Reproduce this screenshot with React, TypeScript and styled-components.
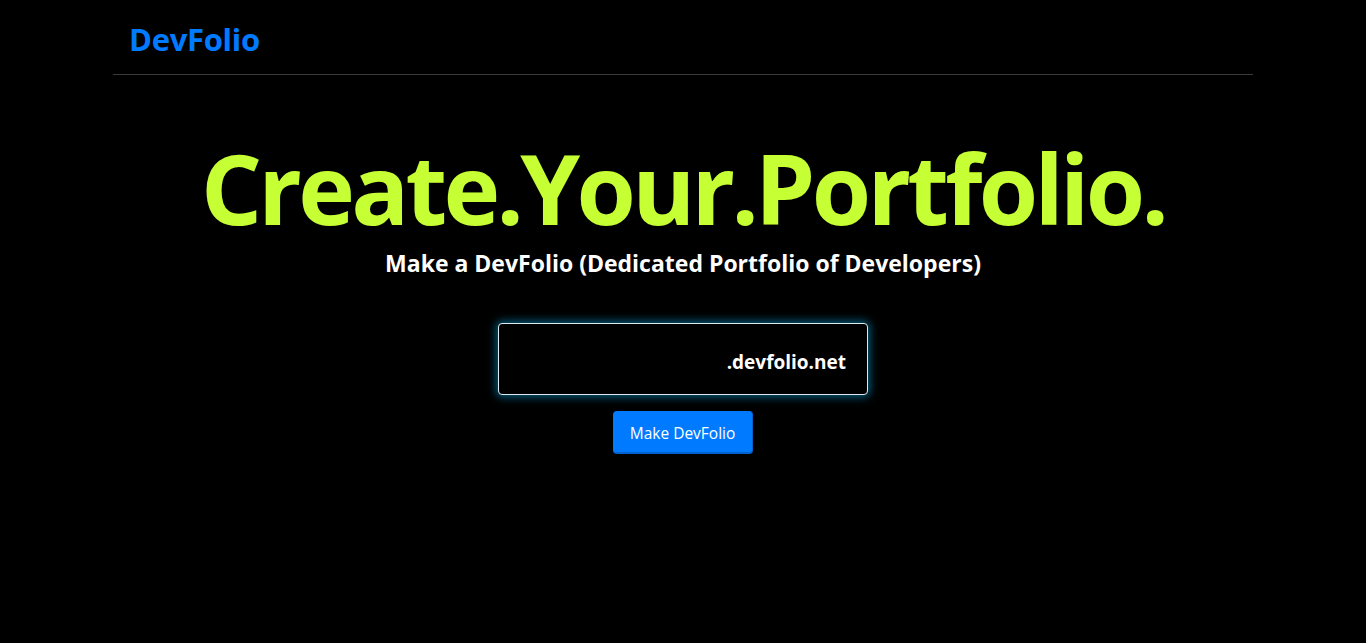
import React from "react";
import styled, { createGlobalStyle } from "styled-components";

const Global = createGlobalStyle`
  html, body { margin: 0; padding: 0; background: #000; }
  body { font-family: "Open Sans", "Noto Sans", sans-serif; color: #fff; }
  * { box-sizing: border-box; }
`;

const Container = styled.div`
  max-width: 1140px;
  margin: 0 auto;
`;

const Nav = styled.nav`
  display: flex;
  align-items: center;
  height: 75px;
  padding: 4px 16px 0;
  border-bottom: 1px solid #3a3a3a;
`;

const Brand = styled.a`
  font-size: 31px;
  font-weight: 700;
  color: #007bff;
  text-decoration: none;
  letter-spacing: -0.3px;
`;

const Hero = styled.main`
  display: flex;
  flex-direction: column;
  align-items: center;
  text-align: center;
  padding-top: 54px;
`;

const Title = styled.h1`
  margin: 0;
  font-size: 96px;
  line-height: 118px;
  font-weight: 700;
  color: #c6ff33;
  letter-spacing: -3.7px;
`;

const Subtitle = styled.h2`
  margin: 0;
  font-size: 23px;
  line-height: 32px;
  font-weight: 700;
  color: #fff;
`;

const DomainBox = styled.label`
  margin-top: 44px;
  width: 370px;
  height: 72px;
  display: flex;
  align-items: center;
  justify-content: flex-end;
  padding: 0 21px;
  border: 1px solid #dfe9ee;
  border-radius: 4px;
  box-shadow: 0 0 8px 2px rgba(0, 170, 230, 0.55);
  background: #000;
`;

const DomainInput = styled.input`
  flex: 1;
  min-width: 0;
  background: transparent;
  border: none;
  outline: none;
  color: #fff;
  font: inherit;
`;

const Suffix = styled.span`
  font-size: 19px;
  font-weight: 700;
  color: #fff;
  padding-top: 5px;
`;

const Button = styled.button`
  margin-top: 16px;
  width: 140px;
  height: 43px;
  padding: 3px 0 0;
  background: #007bff;
  color: #fff;
  border: none;
  border-radius: 4px;
  border-bottom: 2px solid #0062cc;
  border-right: 1px solid #0062cc;
  font-family: "Open Sans", "Noto Sans", sans-serif;
  font-size: 15.5px;
  cursor: pointer;
`;

export default function App() {
  return (
    <>
      <Global />
      <Container>
        <Nav>
          <Brand href="#">DevFolio</Brand>
        </Nav>
        <Hero>
          <Title>Create.Your.Portfolio.</Title>
          <Subtitle>Make a DevFolio (Dedicated Portfolio of Developers)</Subtitle>
          <DomainBox>
            <DomainInput aria-label="subdomain" />
            <Suffix>.devfolio.net</Suffix>
          </DomainBox>
          <Button>Make DevFolio</Button>
        </Hero>
      </Container>
    </>
  );
}
